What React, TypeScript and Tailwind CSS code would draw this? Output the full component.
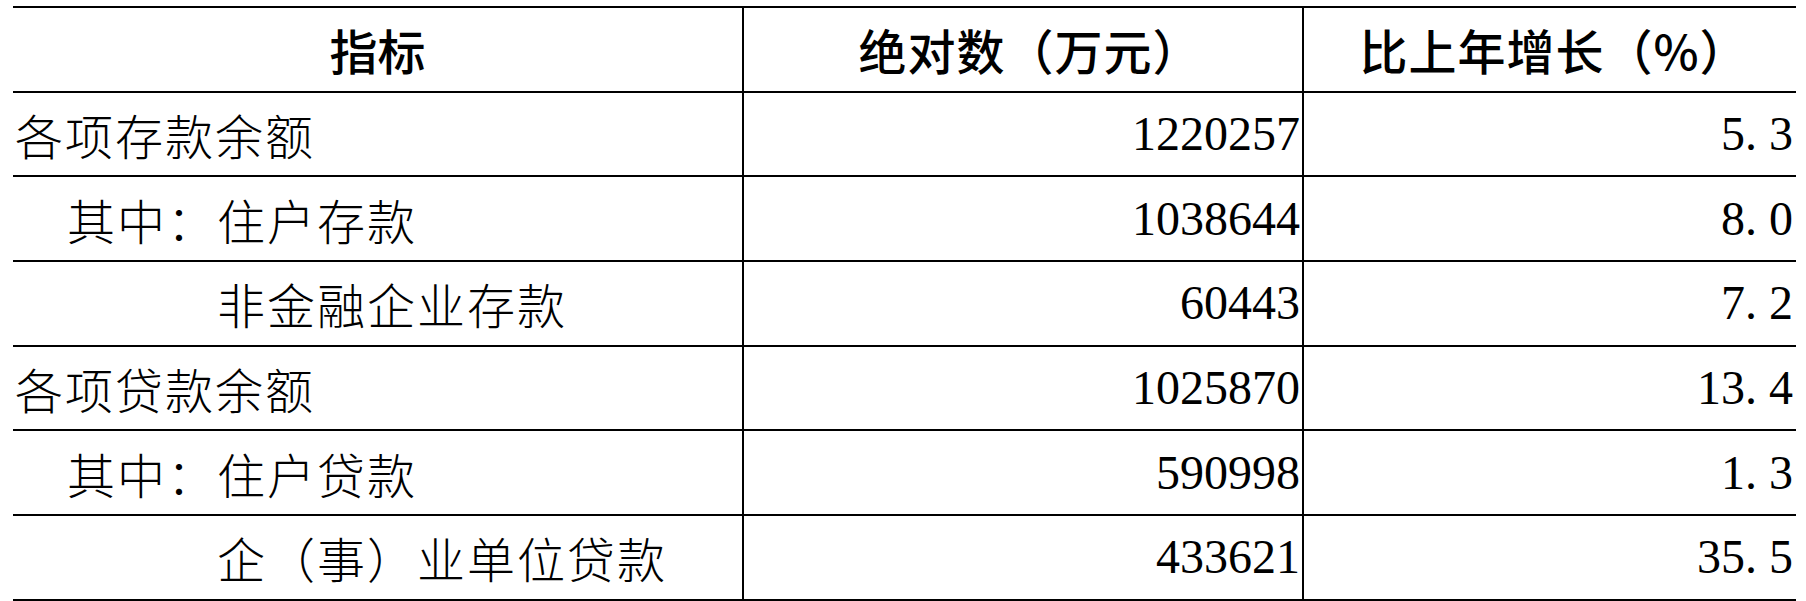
import React from 'react';

type Row = {
  label: string;
  indent: 0 | 1 | 4;
  amount: string;
  growth: string;
};

const rows: Row[] = [
  { label: '各项存款余额', indent: 0, amount: '1220257', growth: '5.3' },
  { label: '其中：住户存款', indent: 1, amount: '1038644', growth: '8.0' },
  { label: '非金融企业存款', indent: 4, amount: '60443', growth: '7.2' },
  { label: '各项贷款余额', indent: 0, amount: '1025870', growth: '13.4' },
  { label: '其中：住户贷款', indent: 1, amount: '590998', growth: '1.3' },
  { label: '企（事）业单位贷款', indent: 4, amount: '433621', growth: '35.5' },
];

const indentClass = {
  0: 'pl-[2px]',
  1: 'pl-[54px]',
  4: 'pl-[204px]',
};

// the dot is as wide as a digit in the source font
const Num = ({ value }: { value: string }) => {
  const parts = value.split('.');
  if (parts.length === 1) return <>{value}</>;
  return (
    <>
      {parts[0]}
      <span className="inline-block w-[24px] text-left">.</span>
      {parts[1]}
    </>
  );
};

const cjk = "font-['Noto_Sans_CJK_SC',sans-serif]";
const digits = "font-['Liberation_Serif','Noto_Sans_CJK_SC',serif]";

export default function App() {
  return (
    <div className="w-[1806px] h-[601px] bg-white pl-[13px] pt-[6px] text-black overflow-hidden">
      <div className="w-[1783px] border-t-2 border-black">
        {/* header */}
        <div className={`grid grid-cols-[729px_560px_494px] h-[84.7px] border-b-2 border-black ${cjk} font-medium text-[48px] leading-none`}>
          <div className="flex items-center justify-center">指标</div>
          <div className="flex items-center justify-center border-l-2 border-black pl-[14px] tracking-[1px]">绝对数（万元）</div>
          <div className="flex items-center justify-center border-l-2 border-black pl-[8px] tracking-[1px]">比上年增长（%）</div>
        </div>

        {rows.map((r) => (
          <div
            key={r.label}
            className="grid grid-cols-[729px_560px_494px] h-[84.7px] border-b-2 border-black text-[48px] leading-none"
          >
            <div className={`flex items-center ${indentClass[r.indent]} ${cjk} font-light tracking-[2px] whitespace-nowrap`}>
              {r.label}
            </div>
            <div className={`flex items-center justify-end border-l-2 border-black pr-[2px] ${digits}`}>
              <Num value={r.amount} />
            </div>
            <div className={`flex items-center justify-end border-l-2 border-black pr-[3px] ${digits}`}>
              <Num value={r.growth} />
            </div>
          </div>
        ))}
      </div>
    </div>
  );
}
